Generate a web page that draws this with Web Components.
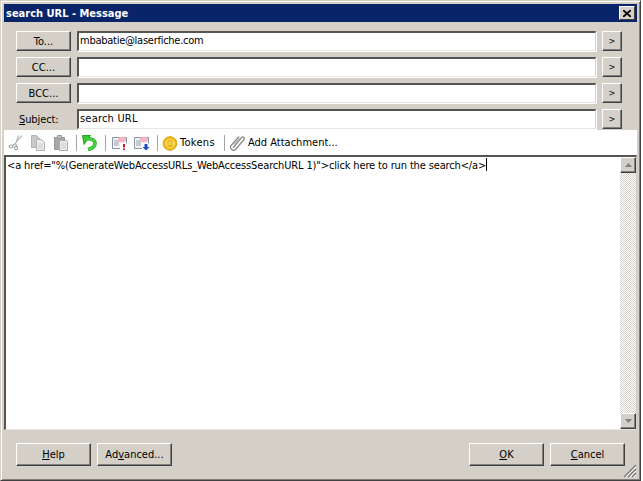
<!DOCTYPE html>
<html>
<head>
<meta charset="utf-8">
<title>search URL - Message</title>
<style>
  html, body { margin: 0; padding: 0; background: #fff; }
</style>
</head>
<body>
<message-dialog caption="search URL - Message">
  <field-row label="To..." value="mbabatie@laserfiche.com" spacing="-.26px"></field-row>
  <field-row label="CC..."></field-row>
  <field-row label="BCC..."></field-row>
  <field-row plain label="Subject:" value="search URL" spacing=".2px"></field-row>
  <message-toolbar slot="toolbar"></message-toolbar>
  <message-editor slot="editor">&lt;a href="%(GenerateWebAccessURLs_WebAccessSearchURL 1)"&gt;click here to run the search&lt;/a&gt;</message-editor>
  <win-button slot="left" wide><u>H</u>elp</win-button>
  <win-button slot="left" wide>Ad<u>v</u>anced...</win-button>
  <win-button slot="right" wide><u>O</u>K</win-button>
  <win-button slot="right" wide><u>C</u>ancel</win-button>
</message-dialog>

<script>
const uiFont = `font-family: "DejaVu Sans", Tahoma, sans-serif; font-stretch: condensed; font-size: 11px;`

class WinButton extends HTMLElement {
    constructor() {
        super()
        this.attachShadow({ mode: 'open' })
        this.shadowRoot.innerHTML = `
        <style>
            :host {
                display: flex;
                align-items: center;
                justify-content: center;
                box-sizing: border-box;
                width: 55px;
                height: 20px;
                background: #d4d0c8;
                border-style: solid;
                border-width: 1px;
                border-color: #fff #404040 #404040 #fff;
                box-shadow: inset -1px -1px 0 #808080;
                ${uiFont}
                color: #000;
                white-space: nowrap;
            }
            :host([wide]) { width: 75px; height: 23px; }
            :host([small]) { width: 20px; font-size: 9px; }
        </style>
        <slot></slot>`
    }
}

class FieldRow extends HTMLElement {
    constructor() {
        super()
        this.attachShadow({ mode: 'open' })
        const plain = this.hasAttribute('plain')
        const label = this.getAttribute('label')
        const value = this.getAttribute('value') || ''
        const spacing = this.getAttribute('spacing') || '0'
        const labelHtml = plain
            ? `<span class="plain"><u>S</u>ubject:</span>`
            : `<win-button>${label}</win-button>`
        this.shadowRoot.innerHTML = `
        <style>
            :host {
                display: grid;
                grid-template-columns: 55px 519px 20px;
                column-gap: 6px;
                height: 20px;
                margin-bottom: 6px;
                ${uiFont}
            }
            .plain { align-self: center; padding-left: 3px; letter-spacing: -.1px; }
            .field {
                box-sizing: border-box;
                height: 20px;
                background: #fff;
                border-style: solid;
                border-width: 2px 1px 1px 2px;
                border-color: #555 #d4d0c8 #e8e6e1 #555;
                box-shadow: 1px 1px 0 #fff;
                padding-left: 1px;
                line-height: 16px;
                white-space: nowrap;
                overflow: hidden;
                letter-spacing: ${spacing};
            }
        </style>
        ${labelHtml}
        <div class="field">${value}</div>
        <win-button small>&gt;</win-button>`
    }
}

class MessageToolbar extends HTMLElement {
    constructor() {
        super()
        this.attachShadow({ mode: 'open' })
        this.shadowRoot.innerHTML = `
        <style>
            :host {
                display: flex;
                align-items: center;
                height: 25px;
                background: #fff;
                padding-left: 4px;
                ${uiFont}
                white-space: nowrap;
            }
            svg { display: block; flex: none; width: 16px; height: 16px; }
            .sep { width: 1px; height: 16px; background: #a6a6a0; flex: none; }
        </style>
        <svg viewBox="0 0 16 16"><path d="M14 0.500L7.500 8M10.500 0.500L7.500 9" fill="none" stroke="#bcbcbc" stroke-width="1.200"/><path d="M7.500 8.500L4.500 10.500M8 9l.5 2.500" fill="none" stroke="#a4a4a4" stroke-width="1.100"/><ellipse cx="3" cy="11.500" rx="1.900" ry="1.500" fill="none" stroke="#9c9c9c" stroke-width="1.100"/><ellipse cx="8" cy="13" rx="1.500" ry="1.800" fill="none" stroke="#9c9c9c" stroke-width="1.100"/></svg>
        <svg style="margin-left:6px" viewBox="0 0 16 16"><path d="M1.500 .5h5l3 3v9h-8z" fill="#c8c8c8" stroke="#b4b4b4"/><path d="M6.500 4.500h5l3 3v8h-8z" fill="#ececec" stroke="#b0b0b0"/><path d="M8 9h5M8 11h5M8 13h5" stroke="#cccccc"/></svg>
        <svg style="margin-left:7px" viewBox="0 0 16 16"><path d="M1.500 2.500h10v12h-10z" fill="#a8a8a4" stroke="#989898"/><path d="M4.500 .5h4v3h-4z" fill="#c4c4c4" stroke="#989898"/><path d="M6.500 5.500h7l1 1v9h-8z" fill="#ececec" stroke="#a8a8a8"/><path d="M8 9h5M8 11h5M8 13h5" stroke="#cccccc"/></svg>
        <span class="sep" style="margin-left:7px"></span>
        <svg style="margin-left:4px" viewBox="0 0 16 16"><path d="M5 3.500C11 3.500 14 5.500 14 8.500 14 11.500 11 13.500 7 14.500" fill="none" stroke="#2aa62a" stroke-width="3.600"/><path d="M1.500.5L9.500.5 3 9.500z" fill="#34c534" stroke="#2aa62a" stroke-linejoin="round"/><path d="M5 3.500C11 3.500 14 5.500 14 8.500 14 11.500 11 13.500 7 14.500" fill="none" stroke="#44d63c" stroke-width="2.200"/></svg>
        <span class="sep" style="margin-left:8px"></span>
        <svg style="margin-left:6px" viewBox="0 0 16 16"><path d="M.5 2.500h14v11H.5z" fill="#f2f3f5" stroke="#8c94a4"/><path d="M2 6h5M2 8h5M2 10h5" stroke="#9ca2b0"/><ellipse cx="10" cy="4.500" rx="4" ry="2.800" fill="#f6b4c0"/><path d="M8 8.500h7v7H8z" fill="#fff"/><path d="M11 9h2v3.500h-2zM11 13.500h2V15h-2z" fill="#c81818"/></svg>
        <svg style="margin-left:6px" viewBox="0 0 16 16"><path d="M.5 2.500h14v11H.5z" fill="#f2f3f5" stroke="#8c94a4"/><path d="M2 6h5M2 8h5M2 10h5" stroke="#9ca2b0"/><ellipse cx="10" cy="4.500" rx="4" ry="2.800" fill="#f6b4c0"/><path d="M8 8.500h7v7H8z" fill="#fff"/><path d="M10.500 9h3v3h2L12 15.500 8.500 12h2z" fill="#1c50c0"/></svg>
        <span class="sep" style="margin-left:7px"></span>
        <svg style="margin-left:4px" viewBox="0 0 16 16"><circle cx="8" cy="8.500" r="6.800" fill="#f2b90f" stroke="#d09a10" stroke-width=".9"/><circle cx="8" cy="8.500" r="4.800" fill="#fbdc5e"/><path d="M5.500 5h5v7h-5z" fill="#eab21a"/><path d="M6.500 6.500h3v1h-3zM6.500 8.500h3v1h-3z" fill="#fbe680"/></svg>
        <span style="margin-left:2px;width:44px;letter-spacing:.3px">Tokens</span>
        <span class="sep"></span>
        <svg style="margin-left:4px" viewBox="0 0 16 16"><path d="M4 13L12.500 2.500c1.500-1.800 3.800.3 2.500 2L6.500 14.500c-2 2.300-6.500-1-4.500-3.800L10 1.500" fill="none" stroke="#8c8c8c" stroke-width="1.300"/><path d="M5 9.500L11 3" fill="none" stroke="#b8b8b8" stroke-width="1.300"/></svg>
        <span style="margin-left:3px">Add Attachment...</span>`
    }
}

class MessageEditor extends HTMLElement {
    constructor() {
        super()
        this.attachShadow({ mode: 'open' })
        this.shadowRoot.innerHTML = `
        <style>
            :host {
                display: flex;
                height: 275px;
                box-sizing: border-box;
                background: #fff;
                border-style: solid;
                border-width: 2px 1px 1px 2px;
                border-color: #555 #d4d0c8 #e8e6e1 #555;
                ${uiFont}
            }
            .text { flex: 1; padding: 1px 0 0 1px; line-height: 15px; letter-spacing: -.14px; }
            .caret { display: inline-block; width: 1px; height: 13px; background: #000; vertical-align: -2px; }
            .bar {
                display: flex;
                flex-direction: column;
                width: 16px;
                background-color: #eee;
                background-image: conic-gradient(#d4d0c8 25%, #fff 0 50%, #d4d0c8 0 75%, #fff 0);
                background-size: 2px 2px;
            }
            .arrow {
                display: flex;
                align-items: center;
                justify-content: center;
                box-sizing: border-box;
                height: 16px;
                background: #d4d0c8;
                border-style: solid;
                border-width: 1px;
                border-color: #fff #404040 #404040 #fff;
                box-shadow: inset -1px -1px 0 #808080;
            }
            .track { flex: 1; }
            svg { display: block; width: 7px; height: 4px; fill: #808080; }
        </style>
        <div class="text"><slot></slot><span class="caret"></span></div>
        <div class="bar">
            <div class="arrow"><svg viewBox="0 0 7 4"><path d="M3.500 0L7 4H0z"/></svg></div>
            <div class="track"></div>
            <div class="arrow"><svg viewBox="0 0 7 4"><path d="M0 0h7L3.500 4z"/></svg></div>
        </div>`
    }
}

class MessageDialog extends HTMLElement {
    constructor() {
        super()
        this.attachShadow({ mode: 'open' })
        const caption = this.getAttribute('caption')
        this.shadowRoot.innerHTML = `
        <style>
            :host {
                display: flex;
                flex-direction: column;
                box-sizing: border-box;
                width: 641px;
                height: 481px;
                background: #d4d0c8;
                border-style: solid;
                border-width: 1px;
                border-color: #d4d0c8 #404040 #404040 #d4d0c8;
                box-shadow: inset 1px 1px 0 #fff, inset -1px -1px 0 #808080;
                padding: 3px 3px 1px 3px;
            }
            header {
                display: flex;
                align-items: center;
                justify-content: space-between;
                height: 18px;
                flex: none;
                background: #0a246a;
                color: #fff;
                ${uiFont}
                font-weight: bold;
                padding: 0 2px;
            }
            .close {
                box-sizing: border-box;
                width: 16px;
                height: 14px;
                background: #d4d0c8;
                border-style: solid;
                border-width: 1px;
                border-color: #fff #404040 #404040 #fff;
                display: flex;
                align-items: center;
                justify-content: center;
            }
            .close svg { width: 8px; height: 7px; display: block; }
            .fields { padding: 9px 15px 0 12px; height: 108px; box-sizing: border-box; flex: none; }
            .footer {
                flex: 1;
                display: flex;
                justify-content: space-between;
                padding: 13px 12px 0 12px;
                position: relative;
            }
            .group { display: flex; gap: 6px; }
            .grip { position: absolute; right: 0; bottom: 1px; width: 14px; height: 14px; }
        </style>
        <header>
            <span>${caption}</span>
            <span class="close"><svg viewBox="0 0 8 7"><path d="M0 0l8 7M8 0L0 7" stroke="#000" stroke-width="1.800"/></svg></span>
        </header>
        <div class="fields"><slot></slot></div>
        <slot name="toolbar"></slot>
        <slot name="editor"></slot>
        <div class="footer">
            <div class="group"><slot name="left"></slot></div>
            <div class="group"><slot name="right"></slot></div>
            <svg class="grip" viewBox="0 0 14 14"><path d="M13 1L1 13M13 5L5 13M13 9L9 13" stroke="#808080" stroke-width="1.500" fill="none"/><path d="M13 3L3 13M13 7L7 13M13 11L11 13" stroke="#fff" fill="none"/></svg>
        </div>`
    }
}

customElements.define('win-button', WinButton)
customElements.define('field-row', FieldRow)
customElements.define('message-toolbar', MessageToolbar)
customElements.define('message-editor', MessageEditor)
customElements.define('message-dialog', MessageDialog)
</script>
</body>
</html>
